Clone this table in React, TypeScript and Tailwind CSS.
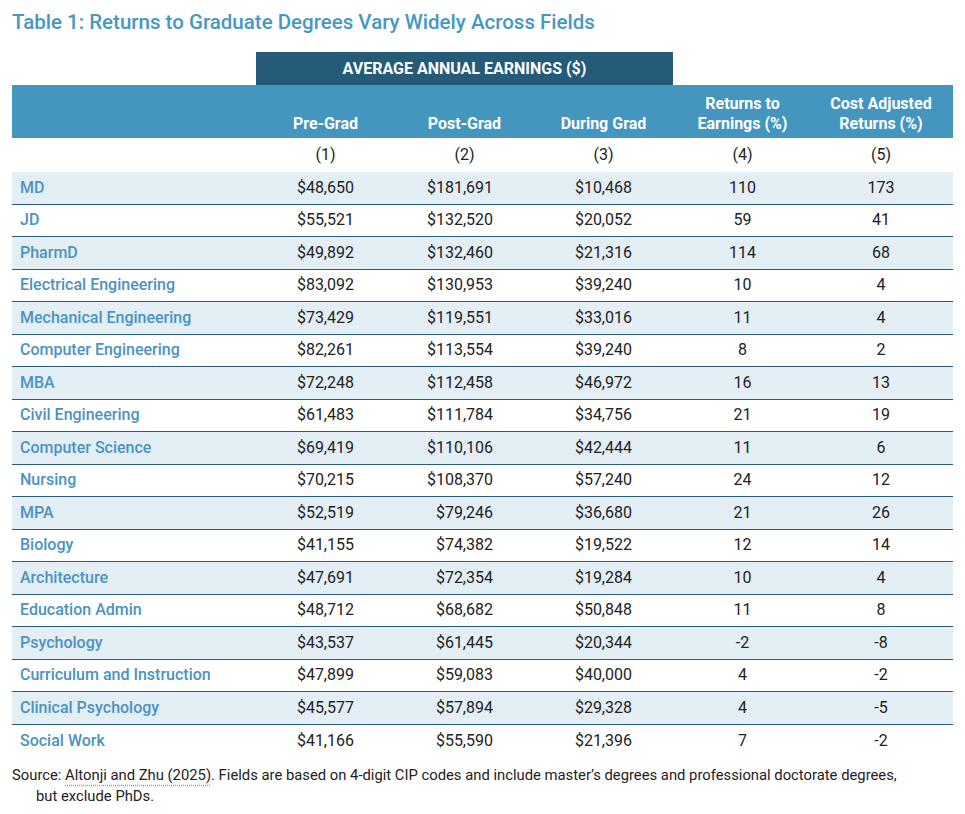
const ROWS: [string, string, string, string, string, string][] = [
  ['MD', '$48,650', '$181,691', '$10,468', '110', '173'],
  ['JD', '$55,521', '$132,520', '$20,052', '59', '41'],
  ['PharmD', '$49,892', '$132,460', '$21,316', '114', '68'],
  ['Electrical Engineering', '$83,092', '$130,953', '$39,240', '10', '4'],
  ['Mechanical Engineering', '$73,429', '$119,551', '$33,016', '11', '4'],
  ['Computer Engineering', '$82,261', '$113,554', '$39,240', '8', '2'],
  ['MBA', '$72,248', '$112,458', '$46,972', '16', '13'],
  ['Civil Engineering', '$61,483', '$111,784', '$34,756', '21', '19'],
  ['Computer Science', '$69,419', '$110,106', '$42,444', '11', '6'],
  ['Nursing', '$70,215', '$108,370', '$57,240', '24', '12'],
  ['MPA', '$52,519', '$79,246', '$36,680', '21', '26'],
  ['Biology', '$41,155', '$74,382', '$19,522', '12', '14'],
  ['Architecture', '$47,691', '$72,354', '$19,284', '10', '4'],
  ['Education Admin', '$48,712', '$68,682', '$50,848', '11', '8'],
  ['Psychology', '$43,537', '$61,445', '$20,344', '-2', '-8'],
  ['Curriculum and Instruction', '$47,899', '$59,083', '$40,000', '4', '-2'],
  ['Clinical Psychology', '$45,577', '$57,894', '$29,328', '4', '-5'],
  ['Social Work', '$41,166', '$55,590', '$21,396', '7', '-2'],
]

const GRID = 'grid grid-cols-[244px_139px_139px_139px_139px_138px]'

export default function App() {
  return (
    <div className="min-h-screen bg-white px-3 pt-[9px] text-[#222] font-['Roboto',sans-serif]">
      <h1 className="text-[20.5px] leading-[27px] font-medium text-[#4797c3]">
        Table 1: Returns to Graduate Degrees Vary Widely Across Fields
      </h1>

      {/* Group header */}
      <div className={`${GRID} mt-[16px]`}>
        <div />
        <div className="col-span-3 h-[33px] bg-[#265a79] flex items-center justify-center text-white text-[16px] font-bold">
          AVERAGE ANNUAL EARNINGS ($)
        </div>
      </div>

      {/* Column header */}
      <div className={`${GRID} h-[53px] bg-[#4496bf] text-white text-[16px] font-bold leading-[20px]`}>
        <div />
        <div className="flex items-end justify-center pb-[4px]">Pre-Grad</div>
        <div className="flex items-end justify-center pb-[4px]">Post-Grad</div>
        <div className="flex items-end justify-center pb-[4px]">During Grad</div>
        <div className="flex items-end justify-center pb-[4px] text-center">
          Returns to
          <br />
          Earnings (%)
        </div>
        <div className="flex items-end justify-center pb-[4px] text-center">
          Cost Adjusted
          <br />
          Returns (%)
        </div>
      </div>

      <div className={`${GRID} h-[34px] items-center text-[16px]`}>
        <div />
        <div className="text-center">(1)</div>
        <div className="text-center">(2)</div>
        <div className="text-center">(3)</div>
        <div className="text-center">(4)</div>
        <div className="text-center">(5)</div>
      </div>

      {ROWS.map((r, i) => (
        <div
          key={r[0]}
          className={`${GRID} h-[32.5px] items-center text-[16px] ${i % 2 === 0 ? 'bg-[#e3eef5]' : 'bg-white'} ${
            i < ROWS.length - 1 ? 'border-b border-[#2b5b7b]' : ''
          }`}
        >
          <div className="pl-2 font-medium text-[#4b93c0]">{r[0]}</div>
          <div className="text-right pr-[41px]">{r[1]}</div>
          <div className="text-right pr-[41px]">{r[2]}</div>
          <div className="text-right pr-[41px]">{r[3]}</div>
          <div className="text-center">{r[4]}</div>
          <div className="text-center">{r[5]}</div>
        </div>
      ))}

      <div className="mt-[8px] text-[14.8px] leading-[21px]">
        <div>
          Source:{' '}
          <span className="underline decoration-dotted decoration-[#999] underline-offset-[5px]">
            Altonji and Zhu (2025)
          </span>
          . Fields are based on 4-digit CIP codes and include master’s degrees and professional doctorate degrees,
        </div>
        <div className="pl-6">but exclude PhDs.</div>
      </div>
    </div>
  )
}
